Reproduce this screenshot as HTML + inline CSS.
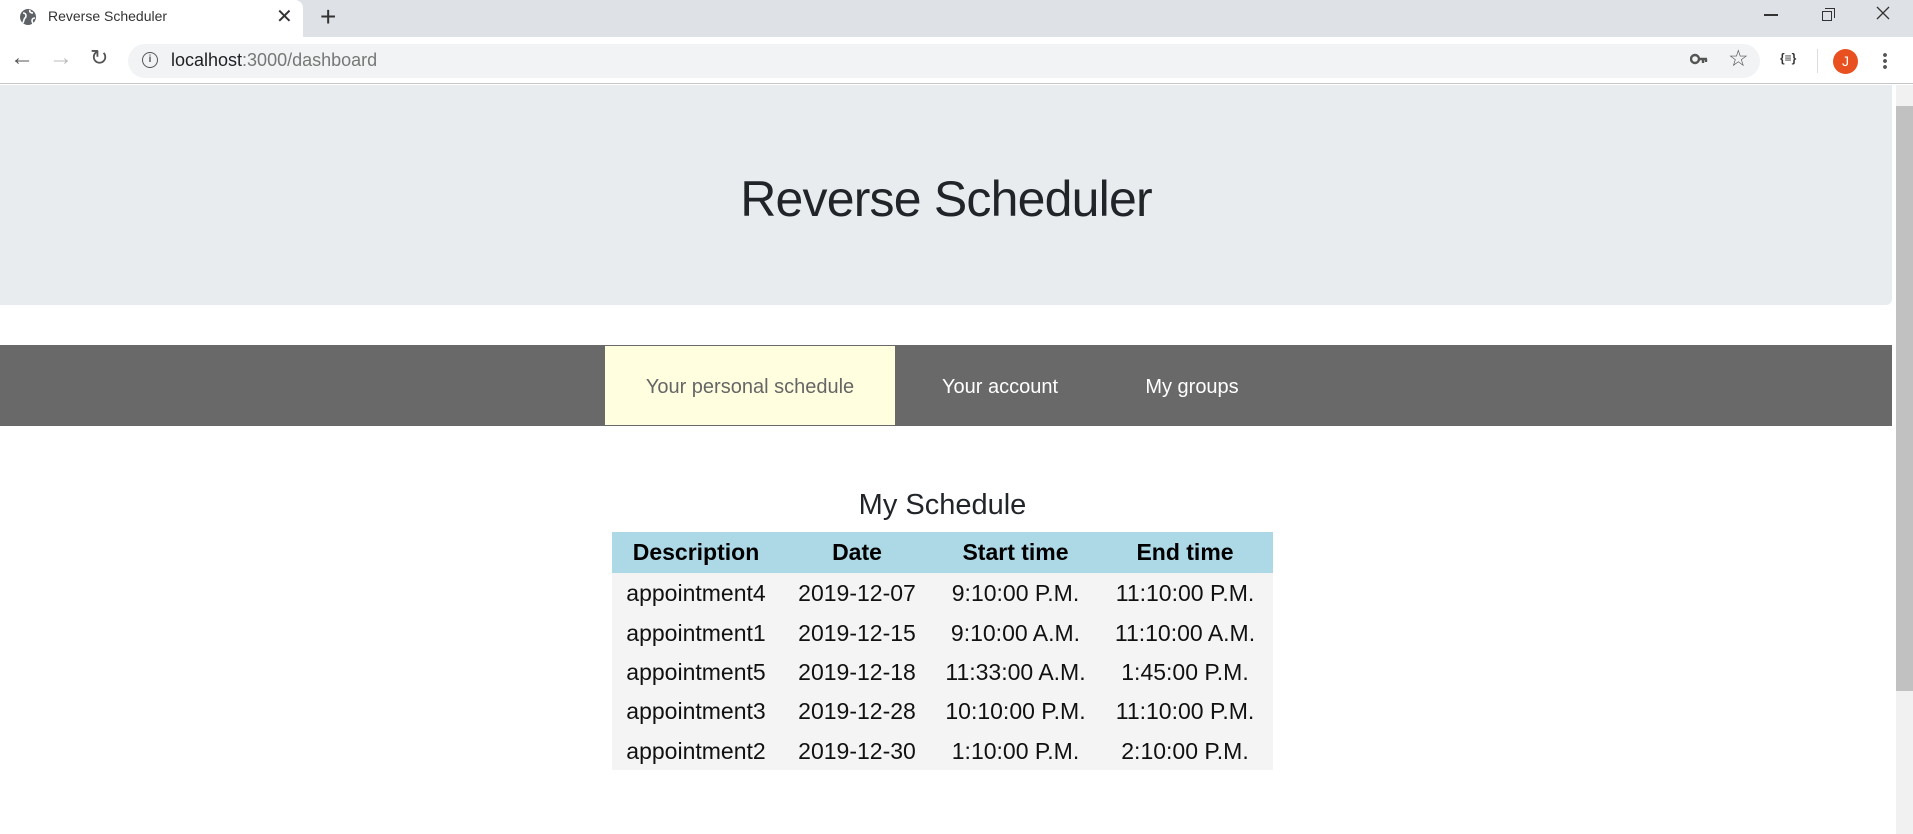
<!DOCTYPE html>
<html><head><meta charset="utf-8"><style>
*{margin:0;padding:0;box-sizing:border-box}
body{width:1913px;height:834px;overflow:hidden;background:#fff;font-family:"Liberation Sans",sans-serif;position:relative}
.abs{position:absolute}
#tabbar{left:0;top:0;width:1913px;height:37px;background:#dee1e6}
#tab{left:0;top:0;width:303px;height:37px;background:#fff;border-top-right-radius:8px}
#toolbar{left:0;top:37px;width:1913px;height:47px;background:#fff;border-bottom:1px solid #c6c6c6}
#omni{left:128px;top:44px;width:1632px;height:34px;background:#f1f3f4;border-radius:17px}
#jumbo{left:0;top:85px;width:1892px;height:220px;background:#e9ecef;border-bottom-right-radius:6px}
#scroll{left:1896px;top:85px;width:17px;height:749px;background:#f1f1f1}
#thumb{left:1896px;top:106px;width:17px;height:585px;background:#c1c1c1}
h1{position:absolute;left:0;width:1892px;top:169px;text-align:center;font-weight:normal;font-size:50px;letter-spacing:-0.8px;color:#212529;line-height:60px}
#nav{left:0;top:345px;width:1892px;height:81px;background:#696969}
#active{left:605px;top:346px;width:290px;height:79px;background:#ffffe0}
.nt{position:absolute;top:374px;font-size:20px;line-height:26px;color:#fff;text-align:center}
h2{position:absolute;left:612px;width:661px;top:487px;text-align:center;font-weight:normal;font-size:29px;color:#212529;line-height:36px}
table{position:absolute;left:612px;top:532px;width:661px;border-collapse:collapse;font-size:23px;color:#111}
th{background:#add8e6;height:41px;font-weight:bold;text-align:center;color:#000}
td{background:#f4f4f4;height:39.4px;text-align:center;white-space:nowrap;padding-top:2px}
</style></head><body>
<div id="tabbar" class="abs"></div>
<div id="tab" class="abs"></div>
<svg class="abs" style="left:19px;top:8px" width="18" height="18" viewBox="0 0 18 18"><circle cx="9" cy="9" r="8" fill="#5f6368"/><path d="M4 5c2 0 3 1 3 3s-2 2-2 4l-1 3M11 2c-1 2 1 3 3 3M16 10c-2 0-3 1-3 3l1 3" stroke="#fff" stroke-width="1.6" fill="none"/></svg>
<div class="abs" style="left:48px;top:8px;font-size:14px;color:#333">Reverse Scheduler</div>
<div class="abs" style="left:276px;top:4px;font-size:20px;color:#333">✕</div>
<div class="abs" style="left:320px;top:1px;font-size:28px;color:#333">+</div>
<div class="abs" style="left:1764px;top:14px;width:14px;height:1.5px;background:#333"></div>
<div class="abs" style="left:1822px;top:11px;width:10px;height:10px;border:1.5px solid #333;background:#dee1e6"></div>
<div class="abs" style="left:1825px;top:8px;width:10px;height:10px;border-top:1.5px solid #333;border-right:1.5px solid #333"></div>
<svg class="abs" style="left:1876px;top:6px" width="14" height="14" viewBox="0 0 14 14"><path d="M1 1L13 13M13 1L1 13" stroke="#333" stroke-width="1.3"/></svg>
<div id="toolbar" class="abs"></div>
<div id="omni" class="abs"></div>
<div class="abs" style="left:10px;top:44px;font-size:24px;color:#555">←</div>
<div class="abs" style="left:49px;top:44px;font-size:24px;color:#bbb">→</div>
<div class="abs" style="left:90px;top:45px;font-size:22px;color:#555">↻</div>
<div class="abs" style="left:142px;top:52px;width:16px;height:16px;border:1.6px solid #555;border-radius:50%;font-size:10px;text-align:center;line-height:13px;color:#555;font-weight:bold">i</div>
<div class="abs" style="left:171px;top:50px;font-size:18px;color:#202124">localhost<span style="color:#777">:3000/dashboard</span></div>
<svg class="abs" style="left:1690px;top:53px" width="18" height="12" viewBox="0 0 18 12"><circle cx="5" cy="6" r="4" fill="none" stroke="#555" stroke-width="2.4"/><path d="M9 6H17M13 6V10M16 6V9" stroke="#555" stroke-width="2.4"/></svg>
<div class="abs" style="left:1728px;top:45px;font-size:23px;color:#555">☆</div>
<div class="abs" style="left:1780px;top:51px;font-size:12px;color:#333;font-weight:bold">{≡}</div>
<div class="abs" style="left:1817px;top:49px;width:1px;height:24px;background:#ddd"></div>
<div class="abs" style="left:1833px;top:49px;width:25px;height:25px;border-radius:50%;background:#e8501f;color:#fff;font-size:14px;text-align:center;line-height:25px">J</div>
<div class="abs" style="left:1883px;top:52px;width:4px;height:18px;background:radial-gradient(circle,#555 1.8px,transparent 2px) 0 0/4px 6px"></div>
<div id="jumbo" class="abs"></div>
<div id="scroll" class="abs"></div>
<div id="thumb" class="abs"></div>
<h1>Reverse Scheduler</h1>
<div id="nav" class="abs"></div>
<div id="active" class="abs"></div>
<div class="nt" style="left:605px;width:290px;color:#666">Your personal schedule</div>
<div class="nt" style="left:920px;width:160px">Your account</div>
<div class="nt" style="left:1112px;width:160px">My groups</div>
<h2>My Schedule</h2>
<table>
<tr><th style="width:168px">Description</th><th style="width:154px">Date</th><th style="width:163px">Start time</th><th style="width:176px">End time</th></tr>
<tr><td>appointment4</td><td>2019-12-07</td><td>9:10:00 P.M.</td><td>11:10:00 P.M.</td></tr>
<tr><td>appointment1</td><td>2019-12-15</td><td>9:10:00 A.M.</td><td>11:10:00 A.M.</td></tr>
<tr><td>appointment5</td><td>2019-12-18</td><td>11:33:00 A.M.</td><td>1:45:00 P.M.</td></tr>
<tr><td>appointment3</td><td>2019-12-28</td><td>10:10:00 P.M.</td><td>11:10:00 P.M.</td></tr>
<tr><td>appointment2</td><td>2019-12-30</td><td>1:10:00 P.M.</td><td>2:10:00 P.M.</td></tr>
</table>
</body></html>
